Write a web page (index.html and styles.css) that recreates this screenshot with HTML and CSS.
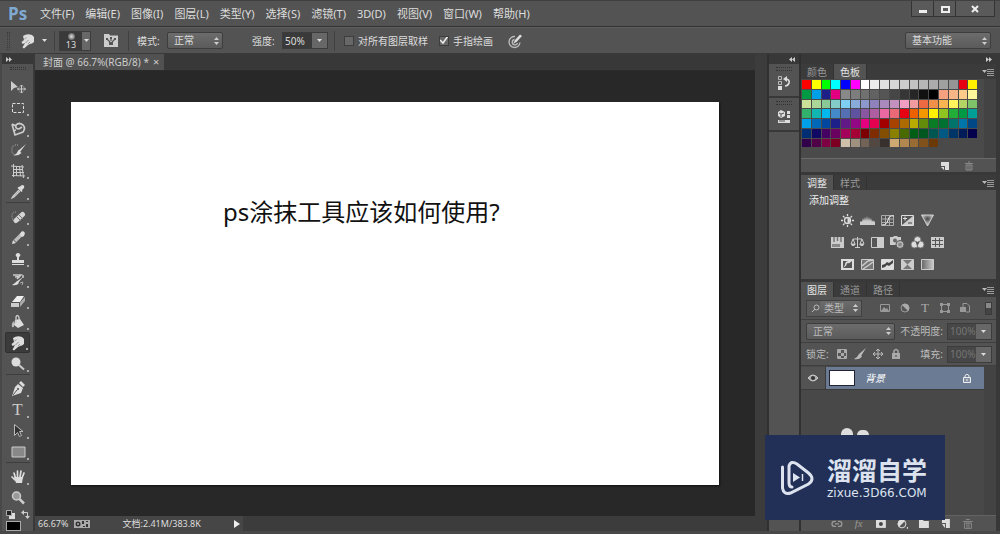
FILE: index.html
```html
<!DOCTYPE html>
<html lang="zh-CN">
<head>
<meta charset="utf-8">
<title>封面 @ 66.7%(RGB/8)</title>
<link rel="stylesheet" href="styles.css">
</head>
<body>
<div class="app">
  <header class="menubar">
    <span class="logo">Ps</span>
    <nav class="menus">
      <button>文件(F)</button><button>编辑(E)</button><button>图像(I)</button><button>图层(L)</button><button>类型(Y)</button><button>选择(S)</button><button>滤镜(T)</button><button>3D(D)</button><button>视图(V)</button><button>窗口(W)</button><button>帮助(H)</button>
    </nav>
    <div class="window-buttons">
      <button aria-label="最小化"><svg width="12" height="10" viewBox="0 0 12 10"><path d="M2 6h8v3H2z" fill="#eee"/></svg></button>
      <button aria-label="最大化"><svg width="12" height="10" viewBox="0 0 12 10"><path d="M3 3h7v5H3z" fill="none" stroke="#eee" stroke-width="2"/></svg></button>
      <button class="close" aria-label="关闭"><svg width="12" height="10" viewBox="0 0 12 10"><path d="M3 2l6 6M9 2L3 8" stroke="#eee" stroke-width="2"/></svg></button>
    </div>
  </header>

  <div class="options">
    <span class="grip-v"></span>
    <button class="tool-preset" aria-label="涂抹工具">
      <svg width="16" height="16" viewBox="0 0 16 16"><path d="M3 3q4-3 9-1l2 2v5q-2 2-4 2l-2 1-4 3.500-1.500-1L5 10l-2.500 1-1-2L4 7z" fill="#ddd"/><path d="M5.500 10l3-3M8 11l2-2M4.500 6l2-1.500" stroke="#777" stroke-width=".7"/></svg>
      <svg width="6" height="4" viewBox="0 0 6 4"><path d="M0 0h5L2.500 3z" fill="#ddd"/></svg>
    </button>
    <span class="divider"></span>
    <button class="brush" aria-label="画笔大小 13"><span class="brush-view"><i></i>13</span><span class="brush-caret caret"></span></button>
    <button class="brush-panel" aria-label="画笔面板"><svg width="16" height="16" viewBox="0 0 16 16"><path d="M1 1h5l1 1.500h8V14H1z" fill="#ccc"/><path d="M4 6l3 3M12 6L9 9M8 5v3" stroke="#555" stroke-width="1.200"/><path d="M3 5h2v2H3zM11 5h2v2h-2zM7 4h2v2H7zM6 9h4v3H6z" fill="#555"/></svg></button>
    <span class="divider"></span>
    <label class="mode-label" for="mode">模式:</label>
    <select id="mode" class="dropdown mode"><option>正常</option></select>
    <label class="strength-label" for="strength">强度:</label>
    <span class="number"><input id="strength" value="50%"><button class="caret" aria-label="强度滑块"></button></span>
    <span class="divider"></span>
    <label class="check all-layers"><input type="checkbox">对所有图层取样</label>
    <label class="check"><input type="checkbox" checked>手指绘画</label>
    <button class="pressure" aria-label="压力控制大小"><svg width="16" height="16" viewBox="0 0 16 16" fill="none"><path d="M8 3.500a5.500 5.500 0 1 0 5 6M7.500 6.500a2.700 2.700 0 1 0 3 3.500" stroke="#bbb" stroke-width="1.300"/><path d="M6 11l2-4 5-5.500 2 1.500-5 5.500z" fill="#ddd"/></svg></button>
    <select class="dropdown workspace" aria-label="工作区"><option>基本功能</option></select>
  </div>

  <main class="work">
    <aside class="tools">
      <div class="dock-head"><svg width="6" height="5" viewBox="0 0 6 5"><path d="M0 0l3 2.500L0 5zM3 0l3 2.500L3 5z" fill="#ccc"/></svg></div>
      <span class="grip"></span>
      <div class="tool-list">
        <button aria-label="移动"><svg viewBox="0 0 16 16"><path d="M1 2v10l3-3 4-1z" fill="#ccc"/><path d="M11.500 6v8M7.500 10h8M10 7.500L11.500 6 13 7.500M10 12.500l1.500 1.500 1.500-1.500M9 8.500L7.500 10 9 11.500M14 8.500l1.500 1.500-1.500 1.500" fill="none" stroke="#ccc"/></svg></button>
        <button class="more" aria-label="矩形选框"><svg viewBox="0 0 16 16"><path d="M2.500 3.500h11v9h-11z" fill="none" stroke="#ddd" stroke-dasharray="3 1.500"/></svg></button>
        <button class="more" aria-label="套索"><svg viewBox="0 0 16 16"><path d="M2 3l3 11 8-3q3-4 0-7-4-3-7 0-1 4 3 4l3-2M2 3l4 2M3 10l3-1" fill="none" stroke="#ccc" stroke-width="1.700"/></svg></button>
        <button class="more" aria-label="快速选择"><svg viewBox="0 0 16 16"><path d="M8 3H5L2 5v6l3 2" fill="none" stroke="#aaa" stroke-dasharray="1 1"/><path d="M16 2l-6 8-2-1zM8.500 8l3 3q-3 3-8 2.500l3-2z" fill="#ddd"/></svg></button>
        <button class="more" aria-label="透视裁剪"><svg viewBox="0 0 16 16"><path d="M3.500 1v13M1 3l13 1M12 2l1.500 13M2 12.500l13 .5M6.500 3v10M9.500 3l1 10M3 6.500h10M3 9.500h11" fill="none" stroke="#ccc"/></svg></button>
        <button class="more" aria-label="吸管"><svg viewBox="0 0 16 16"><path d="M10 2.500l2-1.500q3 0 2 3l-2 2 .5 1-1 1-4-4 1-1z" fill="#ddd"/><path d="M9 6l-6 6-1 2 2-1 6-6" fill="none" stroke="#ccc" stroke-width="1.200"/></svg></button>
        <span class="tool-rule"></span>
        <button class="more" aria-label="污点修复画笔"><svg viewBox="0 0 16 16"><path d="M6 3Q2 3 2 7t3 6" fill="none" stroke="#aaa" stroke-dasharray="1 1"/><path d="M6 11.500l6.500-6" stroke="#d5d5d5" stroke-width="5" stroke-linecap="round"/><path d="M7 8l4 4M9 6l4 4" stroke="#777"/></svg></button>
        <button class="more" aria-label="画笔"><svg viewBox="0 0 16 16"><path d="M5 11l7-7" stroke="#bbb" stroke-width="3.500"/><path d="M11 2l2-1 2 2-1 3-2 1-2-2zM3 10l3 3-4 1z" fill="#ddd"/></svg></button>
        <button class="more" aria-label="仿制图章"><svg viewBox="0 0 16 16"><path d="M7 9V6Q5 5 6 3q2-2 4 0 1 2-1 3v3h5v3H2V9zM2 13h12v1H2z" fill="#ddd"/></svg></button>
        <button class="more" aria-label="历史记录画笔"><svg viewBox="0 0 16 16"><path d="M3 3h8L7 7M13 3v3M5 5q4-1 4 1" fill="none" stroke="#ccc" stroke-width="1.500"/><path d="M13 5l-5 6-2-1zM7 9l2 2q-2 3-7 2l3-2z" fill="#ddd"/><path d="M10 11l3-1-1 3" stroke="#aaa" fill="none"/></svg></button>
        <button class="more" aria-label="橡皮擦"><svg viewBox="0 0 16 16"><path d="M2 9l5-6h7l-4 6z" fill="#eee"/><path d="M1 10h8v4H1z" fill="#ccc"/><path d="M10 9.500L15 4v4l-5 6z" fill="#aaa"/></svg></button>
        <button class="more" aria-label="油漆桶"><svg viewBox="0 0 16 16"><path d="M5 6l5-1 4 6-6 3-4-3z" fill="#ddd"/><path d="M6 9V3q1-3 3 0v3" fill="none" stroke="#ccc" stroke-width="1.300"/><path d="M4 7Q1 9 2 13q2 1 2-1z" fill="#bbb"/></svg></button>
        <button class="more on" aria-label="涂抹"><svg viewBox="0 0 16 16"><path d="M3 3q4-3 9-1l2 2v5q-2 2-4 2l-2 1-4 3.500-1.500-1L5 10l-2.500 1-1-2L4 7z" fill="#ddd"/><path d="M5.500 10l3-3M8 11l2-2M4.500 6l2-1.500" stroke="#777" stroke-width=".7"/></svg></button>
        <button class="more" aria-label="减淡"><svg viewBox="0 0 16 16"><circle cx="6" cy="6" r="4.500" fill="#ddd"/><path d="M9 9l5 4.500" stroke="#ccc" stroke-width="2"/></svg></button>
        <span class="tool-rule"></span>
        <button class="more" aria-label="钢笔"><svg viewBox="0 0 16 16"><path d="M11 0l4 4-2 2-4-4zM8 3l5 4-2 5-9 3 3-9z" fill="#ddd"/><path d="M3 14l4-5" stroke="#555"/><circle cx="8" cy="8" r="1" fill="#444"/></svg></button>
        <button class="more type" aria-label="横排文字">T</button>
        <button class="more" aria-label="路径选择"><svg viewBox="0 0 16 16"><path d="M4.500 1.500v11l3-3 2 4 2-1-2-4h3.500z" fill="#333" stroke="#bbb"/></svg></button>
        <button class="more" aria-label="矩形"><svg viewBox="0 0 16 16"><path d="M2 3h13v10H2z" fill="#888" stroke="#ccc"/></svg></button>
        <span class="tool-rule"></span>
        <button class="more" aria-label="抓手"><svg viewBox="0 0 16 16"><path d="M5.500 9L4 4M7.500 8V2M10 8l1-6M12 9l2-5M5 11L2 8" stroke="#ddd" stroke-width="1.700" stroke-linecap="round"/><path d="M4 8h9l-1 6H6z" fill="#ddd"/></svg></button>
        <button aria-label="缩放"><svg viewBox="0 0 16 16"><circle cx="6.500" cy="6" r="4" fill="#999" stroke="#ccc" stroke-width="1.500"/><path d="M9.500 9l4.500 4.500" stroke="#ccc" stroke-width="2.500"/></svg></button>
      </div>
      <div class="color-actions">
        <svg width="9" height="9" viewBox="0 0 9 9"><path d="M3 3h6v6H3z" fill="#ddd"/><path d="M.5.500h5v5h-5z" fill="#222" stroke="#aaa"/></svg>
        <svg width="9" height="9" viewBox="0 0 9 9"><path d="M0 2.500L3 0v5zM4 6h5L6.500 9z" fill="#ccc"/><path d="M2 2.500h4.500V7" fill="none" stroke="#ccc"/></svg>
      </div>
      <button class="foreground" aria-label="前景色"></button>
    </aside>

    <section class="document">
      <div class="doc-tabs"><div class="doc-tab"><span>封面 @ 66.7%(RGB/8) *</span><button aria-label="关闭文档">×</button></div></div>
      <div class="canvas"><div class="page"><p>ps涂抹工具应该如何使用?</p></div></div>
      <footer class="status"><div class="status-info">
        <span>66.67%</span>
        <svg width="16" height="8" viewBox="0 0 16 8"><path d="M0 0h16v8H0z" fill="#aaa"/><circle cx="4" cy="4" r="2.500" fill="#333"/><circle cx="4" cy="4" r="1" fill="#aaa"/><path d="M8 1h2v3H8zM12 4h2v3h-2zM12 1h2v1h-2zM9 6h2v1H9z" fill="#333"/></svg>
        <span class="doc-size">文档:2.41M/383.8K</span>
        <button aria-label="状态菜单"><svg width="6" height="8" viewBox="0 0 6 8"><path d="M0 0l6 4-6 4z" fill="#eee"/></svg></button>
      </div></footer>
    </section>
    <div class="doc-scroll"></div>

    <aside class="mini-dock">
      <div class="dock-head end"><svg width="6" height="5" viewBox="0 0 6 5"><path d="M3 0L0 2.500 3 5zM6 0L3 2.500 6 5z" fill="#ccc"/></svg></div>
      <div class="mini"><span class="grip"></span><button aria-label="历史记录"><svg width="14" height="15" viewBox="0 0 14 15"><path d="M1.500 1.500h3v3h-3zM1.500 6.500h3v3h-3z" fill="none" stroke="#bbb"/><path d="M1 11h4v4H1z" fill="#ddd"/><path d="M8 4q5 0 4 4-1 3-4 3" fill="none" stroke="#ddd" stroke-width="1.700"/><path d="M6 4l4-3v6z" fill="#ddd"/></svg></button></div>
      <div class="mini"><span class="grip"></span><button aria-label="属性"><svg width="14" height="15" viewBox="0 0 14 15"><path d="M4 1l4 2v4L4 9 1 7V3z" fill="#ddd"/><path d="M2 4l2 1 3-1M4 5v3" stroke="#555" fill="none"/><path d="M10 2h3v3h-3zM10 6h3v3h-3zM1 11h12v3H1z" fill="#ddd"/><path d="M2 12h6" stroke="#555"/></svg></button></div>
    </aside>

    <aside class="panels">
      <div class="dock-head end"><svg width="6" height="5" viewBox="0 0 6 5"><path d="M0 0l3 2.500L0 5zM3 0l3 2.500L3 5z" fill="#ccc"/></svg></div>
      <section class="panel">
        <div class="tabs"><button>颜色</button><button class="on">色板</button><i class="panel-menu"></i></div>
        <div class="swatch-body"><div class="swatches" id="swatches"></div></div>
        <div class="panel-foot">
          <button aria-label="新建色板"><svg width="10" height="10" viewBox="0 0 10 10"><path d="M1 1h8v8H5V5H1z" fill="#ddd"/><path d="M1 6l3 3V6z" fill="#ddd"/></svg></button>
          <button aria-label="删除色板"><svg width="10" height="10" viewBox="0 0 10 10"><path d="M1 2.500h8M4 1h2M2 4h6v5H2zM4 4v5M6 4v5" fill="none" stroke="#888"/></svg></button>
        </div>
      </section>

      <section class="panel">
        <div class="tabs"><button class="on">调整</button><button>样式</button><i class="panel-menu"></i></div>
        <div class="adjust">
          <h2>添加调整</h2>
          <div class="adjust-row">
            <button aria-label="亮度/对比度"><svg viewBox="0 0 15 13"><g stroke="#ddd" stroke-width="1.300" fill="none"><circle cx="7.500" cy="6.500" r="3"/><path d="M7.500 0v2M7.500 11v2M1 6.500h2M12 6.500h2M3 2l1.500 1.500M12 2l-1.500 1.500M3 11l1.500-1.500M12 11l-1.500-1.500"/></g><path d="M7.500 4v5a2.500 2.500 0 0 0 0-5" fill="#ddd"/></svg></button>
            <button aria-label="色阶"><svg viewBox="0 0 15 13"><path d="M0 11V8l1-1 1 1 1-4 1 3 1-4 1 4 1-5 1 5 1-4 1 4 1-3 1 4 1-2 1 2 1-1v4z" fill="#ccc"/></svg></button>
            <button aria-label="曲线"><svg viewBox="0 0 15 13"><path d="M1.500 1.500h12v10h-12zM5.500 1v10M9.500 1v10M1 5h12M1 8.500h12" fill="none" stroke="#aaa"/><path d="M2 11q5 0 6-5t6-4" fill="none" stroke="#eee"/></svg></button>
            <button aria-label="曝光度"><svg viewBox="0 0 15 13"><path d="M1.500 1.500h12v10h-12z" fill="#555" stroke="#ddd"/><path d="M13 2v9H2z" fill="#ccc"/><path d="M3 4.500h4M5 2.500v4" stroke="#ddd"/><path d="M8 9h4" stroke="#444"/></svg></button>
            <button aria-label="自然饱和度"><svg viewBox="0 0 15 13"><defs><radialGradient id="vibrance" cy=".35"><stop stop-color="#444"/><stop offset=".9" stop-color="#bbb"/></radialGradient></defs><path d="M1.500 1h12l-6 11z" fill="url(#vibrance)" stroke="#ccc"/></svg></button>
          </div>
          <div class="adjust-row">
            <button aria-label="色相/饱和度"><svg viewBox="0 0 15 13"><path d="M1 1h13v11H1z" fill="#ccc"/><path d="M4 1v5M7.500 1v4M11 1v5" stroke="#777" stroke-width="1.500"/><path d="M2 8h8v3H2z" fill="#888"/></svg></button>
            <button aria-label="色彩平衡"><svg viewBox="0 0 15 13"><path d="M7.500 1v10M3 3h9M3 3L1 8h4zM12 3l-2 5h4zM5 11.500h5" fill="none" stroke="#ccc"/><path d="M1 8h5L4 10H2zM9 8h5l-1 2h-2z" fill="#ccc"/></svg></button>
            <button aria-label="黑白"><svg viewBox="0 0 15 13"><path d="M1.500 1.500h12v10h-12z" fill="#555" stroke="#ccc"/><path d="M7 1h7v11H7z" fill="#ccc"/></svg></button>
            <button aria-label="照片滤镜"><svg viewBox="0 0 15 13"><path d="M0 1h3l1-1h3l1 1h3v8H0z" fill="#ccc"/><circle cx="5" cy="4.500" r="2" fill="#666"/><circle cx="10" cy="8.500" r="4" fill="#bbb" stroke="#555"/><circle cx="10" cy="8.500" r="2" fill="#888"/></svg></button>
            <button aria-label="通道混合器"><svg viewBox="0 0 15 13"><g fill="#ddd" stroke="#777"><circle cx="7.500" cy="4" r="3.500"/><circle cx="4.500" cy="8.500" r="3.500"/><circle cx="10.500" cy="8.500" r="3.500"/></g><path d="M5.500 6h4l-2 4z" fill="#555"/></svg></button>
            <button aria-label="颜色查找"><svg viewBox="0 0 15 13"><path d="M1 1h13v11H1z" fill="#ccc"/><path d="M5.500 2v9M9.500 2v9M2 4.500h11M2 8.500h11" stroke="#555"/></svg></button>
          </div>
          <div class="adjust-row">
            <button aria-label="反相"><svg viewBox="0 0 15 13"><path d="M2 2h11v9H2z" fill="#555" stroke="#ddd" stroke-width="2"/><path d="M3 10L12 3H9Q5 3 5 7z" fill="#ddd"/><circle cx="8" cy="6.500" r="1.500" fill="#555"/></svg></button>
            <button aria-label="色调分离"><svg viewBox="0 0 15 13"><path d="M1.500 1.500h12v10h-12z" fill="#777" stroke="#ccc"/><path d="M2 8l6-5 5-1M3 11l6-4 4-3" stroke="#ccc" stroke-width="1.500" fill="none"/></svg></button>
            <button aria-label="阈值"><svg viewBox="0 0 15 13"><path d="M1.500 1.500h12v10h-12z" fill="#ddd" stroke="#ddd"/><path d="M2 7l3-1 2-2 2 1 4-3v3L9 8 7 7l-2 2-3 1z" fill="#444"/></svg></button>
            <button aria-label="可选颜色"><svg viewBox="0 0 15 13"><path d="M1.500 1.500h12v10h-12z" fill="#ccc" stroke="#ccc"/><path d="M3 2h9L7.500 6.500zM3 11h9L7.500 6.500z" fill="#777"/></svg></button>
            <button aria-label="渐变映射"><svg viewBox="0 0 15 13"><defs><linearGradient id="ramp"><stop stop-color="#666"/><stop offset="1" stop-color="#ccc"/></linearGradient></defs><path d="M1.500 1.500h12v10h-12z" fill="url(#ramp)" stroke="#ccc"/></svg></button>
          </div>
        </div>
      </section>

      <section class="panel layers">
        <div class="tabs"><button class="on">图层</button><button>通道</button><button>路径</button><i class="panel-menu"></i></div>
        <div class="layer-row">
          <span class="filter-kind"><svg width="9" height="9" viewBox="0 0 9 9"><circle cx="5.500" cy="3.500" r="2.500" fill="none" stroke="#bbb"/><path d="M4 5L1 8" stroke="#bbb"/></svg><select class="dropdown" aria-label="图层筛选"><option>类型</option></select></span>
          <span class="filter-icons">
            <button aria-label="像素"><svg viewBox="0 0 12 12"><path d="M1.500 2.500h9v7h-9z" fill="none" stroke="#999"/><path d="M2 9l3-4 2 2 1-1 2 3z" fill="#999"/></svg></button>
            <button aria-label="调整"><svg viewBox="0 0 12 12"><circle cx="6" cy="6" r="4" fill="#555" stroke="#999"/><path d="M3 3a4 4 0 0 1 6 6z" fill="#aaa"/></svg></button>
            <button class="type" aria-label="文字">T</button>
            <button aria-label="形状"><svg viewBox="0 0 12 12"><path d="M2.500 2.500h7v7h-7z" fill="none" stroke="#999"/><path d="M1 1h3v3H1zM8 1h3v3H8zM1 8h3v3H1zM8 8h3v3H8z" fill="#999"/></svg></button>
            <button aria-label="智能对象"><svg viewBox="0 0 12 12"><path d="M4 5V1.500h4l2.500 2.500v6H7" fill="none" stroke="#999"/><path d="M1 5h6v5H1z" fill="#999"/></svg></button>
          </span>
          <button class="filter-toggle" aria-label="筛选开关"></button>
        </div>
        <div class="layer-row blend">
          <select class="dropdown" aria-label="混合模式"><option>正常</option></select>
          <label for="opacity">不透明度:</label><span class="number dim"><input id="opacity" value="100%" disabled><button class="caret" aria-label="不透明度滑块"></button></span>
        </div>
        <div class="layer-row locks">
          <span>锁定:</span>
          <span class="lock-icons">
            <button aria-label="锁定透明像素"><svg viewBox="0 0 12 12"><path d="M1.500 1.500h9v9h-9z" fill="#555" stroke="#aaa"/><path d="M2 2h3v3H2zM8 2h2v3H8zM5 5h3v3H5zM2 8h3v2H2zM8 8h2v2H8z" fill="#aaa"/></svg></button>
            <button aria-label="锁定图像像素"><svg viewBox="0 0 12 12"><path d="M12 0L7 8 5 6zM5 6l3 2q-2 4-8 3l3-2z" fill="#bbb"/></svg></button>
            <button aria-label="锁定位置"><svg viewBox="0 0 12 12"><path d="M6 1v10M1 6h10M4 3l2-2 2 2M4 9l2 2 2-2M3 4L1 6l2 2M9 4l2 2-2 2" fill="none" stroke="#bbb"/></svg></button>
            <button aria-label="锁定全部"><svg viewBox="0 0 12 12"><path d="M2 5h8v6H2z" fill="#aaa"/><path d="M4 5V3q2-3 4 0v2" fill="none" stroke="#aaa" stroke-width="1.500"/><path d="M6 7v2" stroke="#444"/></svg></button>
          </span>
          <label for="fill">填充:</label><span class="number dim"><input id="fill" value="100%" disabled><button class="caret" aria-label="填充滑块"></button></span>
        </div>
        <div class="layer-list">
          <div class="layer">
            <button class="eye" aria-label="可见性"><svg width="12" height="8" viewBox="0 0 12 8"><path d="M1 4q5-6 10 0-5 6-10 0z" fill="#aaa" stroke="#ccc"/><circle cx="6" cy="4" r="2" fill="#333"/></svg></button>
            <div class="layer-main"><span class="thumb"></span><span class="layer-name">背景</span><svg width="10" height="11" viewBox="0 0 10 11"><path d="M1.500 4.500h7v5h-7z" fill="#8491a5" stroke="#eee"/><path d="M3 4V2.500q2-2.500 4 0V4M5 6v2" fill="none" stroke="#eee"/></svg></div>
          </div>
        </div>
        <div class="layer-foot">
          <button aria-label="链接"><svg viewBox="0 0 12 12"><path d="M5 3.500H3.500a2.500 2.500 0 0 0 0 5H5M7 3.500h1.500a2.500 2.500 0 0 1 0 5H7M4 6h4" fill="none" stroke="#999" stroke-width="1.300"/></svg></button>
          <button class="fx" aria-label="图层样式">fx</button>
          <button aria-label="蒙版"><svg viewBox="0 0 12 12"><path d="M1 2h10v8H1z" fill="#ddd"/><circle cx="6" cy="6" r="2" fill="#444"/></svg></button>
          <button aria-label="调整图层"><svg viewBox="0 0 12 12"><circle cx="5" cy="6" r="4" fill="#555" stroke="#ddd"/><path d="M2 9a4 4 0 0 1 6-6z" fill="#ddd"/><path d="M10 9h2v2h-2z" fill="#ddd"/></svg></button>
          <button aria-label="新建组"><svg viewBox="0 0 12 12"><path d="M1 2h4l1 1h5v7H1z" fill="#ddd"/></svg></button>
          <button aria-label="新建图层"><svg viewBox="0 0 12 12"><path d="M2 1h8v9H6V5H2z" fill="#ddd"/><path d="M2 6l3 4V6z" fill="#ddd"/></svg></button>
          <button aria-label="删除图层"><svg viewBox="0 0 12 12"><path d="M1 3.500h10M4 1.500h4M2.500 5h7v5.500h-7zM5 5v5M7 5v5" fill="none" stroke="#888"/></svg></button>
        </div>
      </section>
    </aside>
  </main>

  <div class="watermark">
    <svg width="36" height="38" viewBox="0 0 36 38" fill="none" stroke="#dce3ef"><path d="M3.500 8v21q1 7 8 5l18-9q7-5 0-11L18 5q-6-4-8 2v17q0 4 3 4" stroke-width="3" stroke-linecap="round"/><path d="M14 14l7 4.500-7 4.500z" fill="#dce3ef" stroke="none"/><path d="M23.500 15v7" stroke-width="1.500"/></svg>
    <div class="watermark-text"><strong>溜溜自学</strong><span>zixue.3D66.COM</span></div>
  </div>
</div>
<script src="script.js"></script>
</body>
</html>
```
FILE: styles.css
```css
* { box-sizing: border-box; }
body { margin: 0; background: #535353; color: #ddd; font: 10px/14px "Noto Sans", "Noto Sans CJK SC", sans-serif; }
button, input, select { margin: 0; padding: 0; border: 0; background: none; color: inherit; font: inherit; }
svg { display: block; flex: none; }
.app { position: relative; display: flex; flex-direction: column; height: 100vh; overflow: hidden; border-bottom: 3px solid #484848; }

.menubar { display: flex; flex: none; align-items: center; height: 27px; padding-left: 8px; border-top: 1px solid #404040; border-bottom: 1px solid #333; }
.logo { width: 26px; color: #80a9d2; font: bold 17px/24px "Open Sans", sans-serif; }
.menus { display: flex; gap: 11px; padding-left: 6px; font-size: 11px; }
.window-buttons { display: flex; align-self: flex-start; margin: 0 5px 0 auto; border: 1px solid #333; border-top: 0; background: #5a5a5a; }
.window-buttons button { display: grid; place-items: center; width: 22px; height: 15px; border-right: 1px solid #333; }
.window-buttons .close { width: 38px; border: 0; }

.options { display: flex; flex: none; align-items: center; height: 27px; padding: 0 9px 0 7px; border-top: 1px solid #5e5e5e; border-bottom: 1px solid #3a3a3a; }
.grip-v { width: 3px; height: 18px; border: 1px dotted #3b3b3b; border-width: 0 1px; }
.tool-preset { display: flex; align-items: center; gap: 6px; margin-left: 10px; }
.divider { width: 1px; height: 20px; margin: 0 4px 0 6px; background: #404040; }
.brush { display: flex; border: 1px solid #3c3c3c; }
.brush-view { display: flex; flex-direction: column; align-items: center; width: 22px; height: 18px; padding-top: 1px; background: #3a3a3a; font-size: 9px; line-height: 10px; }
.brush-view i { flex: none; width: 7px; height: 7px; border-radius: 50%; background: radial-gradient(#ddd, #3a3a3a); }
.caret { width: 15px; background: #676767 url("data:image/svg+xml,%3Csvg xmlns='http://www.w3.org/2000/svg' width='5' height='3'%3E%3Cpath d='M0 0h5L2.500 3z' fill='%23ddd'/%3E%3C/svg%3E") center no-repeat; }
.brush-caret { width: 8px; }
.brush-panel { margin: 0 3px 0 12px; }
.mode-label { width: 30px; margin-left: 4px; }
.dropdown { appearance: none; height: 17px; padding: 0 14px 0 6px; border: 1px solid #3d3d3d; border-radius: 2px; background: url("data:image/svg+xml,%3Csvg xmlns='http://www.w3.org/2000/svg' width='5' height='8'%3E%3Cpath d='M0 3L2.500 0 5 3zM0 5h5L2.500 8z' fill='%23ccc'/%3E%3C/svg%3E") right 3px center no-repeat, linear-gradient(#6c6c6c, #5b5b5b); line-height: 15px; }
.mode { width: 56px; }
.strength-label { width: 30px; margin-left: 29px; }
.number { display: flex; height: 17px; border: 1px solid #3c3c3c; }
.number input { width: 29px; padding-left: 2px; background: #3a3a3a; }
.check { display: flex; align-items: center; gap: 4px; margin-left: 5px; }
.check input { appearance: none; width: 10px; height: 10px; border: 1px solid #3d3d3d; background: #686868; }
.check input:checked { background: #686868 url("data:image/svg+xml,%3Csvg xmlns='http://www.w3.org/2000/svg' width='10' height='10'%3E%3Cpath d='M1 4l3 3 5-7' fill='none' stroke='%23eee' stroke-width='1.500'/%3E%3C/svg%3E") center no-repeat; }
.all-layers { margin-right: 6px; }
.pressure { margin-left: 14px; }
.workspace { width: 86px; margin-left: auto; }

.work { display: flex; flex: 1; min-height: 0; background: #383838; }
.dock-head { display: flex; flex: none; align-items: center; height: 10px; padding: 0 4px; background: #383838; }
.end { justify-content: flex-end; }
.grip { display: block; flex: none; height: 5px; border: 1px dotted #333; border-width: 1px 0; }
.tools { display: flex; flex: none; flex-direction: column; width: 34px; border-left: 2px solid #484848; border-right: 1px solid #3a3a3a; background: #535353; }
.tools > .grip { width: 16px; height: 3px; margin: 3px 8px 6px; }
.tool-list { display: flex; flex-direction: column; align-items: center; }
.tool-list button { position: relative; display: grid; place-items: center; width: 25px; height: 21px; }
.tool-list svg { width: 16px; height: 16px; }
.more::after { content: ""; position: absolute; right: 1px; bottom: 2px; width: 2px; height: 2px; background: #aaa; }
.tool-list .on { border: 1px solid #303030; border-radius: 2px; background: #3b3b3b; }
.type { color: #ccc; font: 17px/18px "Liberation Serif", serif; }
.tool-rule { width: 24px; height: 4px; border-top: 1px solid #3d3d3d; border-bottom: 1px solid #535353; }
.color-actions { display: flex; justify-content: space-between; width: 24px; margin: 2px 0 2px 4px; }
.foreground { width: 15px; height: 10px; margin-left: 4px; border: 1px solid #aaa; background: #000; }

.document { display: flex; flex: 1; flex-direction: column; min-width: 0; padding-left: 1px; background: #383838; }
.doc-tabs { display: flex; flex: none; height: 17px; border-bottom: 1px solid #2b2b2b; }
.doc-tab { display: flex; align-items: center; gap: 4px; padding: 0 5px 0 8px; background: #515151; color: #ccc; font-size: 10px; }
.doc-tab button { font-size: 11px; }
.canvas { display: flex; flex: 1; align-items: center; justify-content: center; min-height: 0; background: #282828; }
.page { width: 90%; aspect-ratio: 648 / 383; padding: 94px 24px 0 152px; background: #fff; color: #111; box-shadow: 1px 1px 2px #111; }
.page p { margin: 0; font-size: 24px; line-height: 32px; }
.status { flex: none; height: 15px; background: #3c3c3c; }
.status-info { display: flex; align-items: center; width: 208px; height: 15px; padding: 0 3px; background: #464646; font-size: 9px; }
.status-info svg { margin-left: 6px; }
.doc-size { flex: 1; padding-left: 32px; }
.doc-size + button { margin-right: 0; }
.doc-scroll { flex: none; width: 14px; border-right: 2px solid #303030; background: #3c3c3c; }

.mini-dock { flex: none; width: 32px; border-right: 2px solid #303030; background: #535353; }
.mini { display: flow-root; height: 34px; border-bottom: 2px solid #383838; }
.mini .grip { width: 16px; height: 4px; margin: 3px 7px 4px; }
.mini button { display: block; margin: 0 auto; }
.panels { display: flex; flex: none; flex-direction: column; width: 199px; padding-right: 4px; }
.panel { flex: none; margin-bottom: 3px; background: #535353; }
.tabs { display: flex; flex: none; height: 15px; background: #3b3b3b; color: #999; }
.tabs button { padding: 0 6px; border-right: 1px solid #333; }
.tabs .on { background: #535353; color: #e4e4e4; }
.panel-menu { width: 14px; height: 8px; margin: 4px 1px 0 auto; background: url("data:image/svg+xml,%3Csvg xmlns='http://www.w3.org/2000/svg' width='14' height='8'%3E%3Cpath d='M1 2h5L3.500 5z' fill='%23bbb'/%3E%3Cpath d='M6 1.500h7M6 3.500h7M6 5.500h7M6 7.500h7' stroke='%23999'/%3E%3C/svg%3E"); }
.swatch-body { height: 79px; border-right: 12px solid #434343; background: #4a4a4a; }
.swatches { display: grid; grid-template-columns: repeat(18, 1fr); width: 176px; gap: 1px; padding: 1px 0 0 1px; }
.swatches button { aspect-ratio: 1; }
.panel-foot { display: flex; justify-content: flex-end; align-items: center; gap: 14px; height: 14px; padding-right: 22px; border-top: 1px solid #6a6a6a; }
.adjust { padding: 3px 0 4px; }
.adjust h2 { margin: 0 8px 2px; color: #eee; font-size: 10px; font-weight: 400; line-height: 14px; }
.adjust-row { display: flex; justify-content: center; gap: 5px; width: 172px; height: 22px; align-items: center; }
.adjust-row svg { width: 15px; height: 13px; }

.layers { display: flex; flex: 1; flex-direction: column; min-height: 0; margin: 0; }
.layer-row { display: flex; flex: none; align-items: center; height: 23px; padding: 0 4px 0 5px; border-bottom: 1px solid #3f3f3f; color: #bbb; }
.layer-row .dropdown { color: #bbb; }
.filter-kind { display: flex; align-items: center; width: 56px; padding-left: 4px; border: 1px solid #414141; background: #5c5c5c; }
.filter-kind .dropdown { flex: 1; min-width: 0; height: 15px; padding: 0 12px 0 4px; border: 0; background-color: transparent; }
.filter-icons { display: flex; align-items: center; gap: 8px; margin-left: 17px; }
.filter-icons button, .lock-icons button, .layer-foot button { width: 12px; height: 12px; }
.filter-icons .type { color: #aaa; font-size: 13px; line-height: 12px; }
.filter-toggle { width: 7px; height: 13px; margin-left: auto; border: 1px solid #3b3b3b; background: linear-gradient(#888 5px, #444 5px); }
.blend .dropdown { width: 89px; }
.blend label { margin-left: auto; }
.layer-row .number { margin-left: 4px; }
.dim input { width: 28px; background: #474747; color: #757575; }
.lock-icons { display: flex; gap: 6px; margin-left: 7px; }
.locks label { margin-left: auto; }
.layer-list { flex: 1; min-height: 0; padding-top: 1px; border-right: 12px solid #434343; background: #484848; }
.layer { display: flex; height: 23px; border-bottom: 1px solid #3b3b3b; background: #535353; }
.eye { display: grid; flex: none; place-items: center; width: 25px; border-right: 1px solid #3b3b3b; }
.layer-main { display: flex; flex: 1; align-items: center; padding: 0 12px 0 3px; background: #6b7b93; color: #fff; }
.thumb { width: 26px; height: 16px; border: 1px solid #223; background: #fff; }
.layer-name { flex: 1; padding-left: 10px; font-style: italic; }
.layer-foot { display: flex; flex: none; align-items: center; gap: 10px; height: 16px; padding: 0 22px 0 30px; border-top: 1px solid #626262; }
.layer-foot .fx { color: #999; font: italic 11px/11px "Liberation Serif", serif; }

.watermark { position: absolute; right: 55px; bottom: 11px; display: flex; align-items: center; gap: 12px; width: 180px; height: 85px; padding-left: 14px; background: #222f56; color: #dce3ef; }
.watermark::before, .watermark::after { content: ""; position: absolute; top: -7px; left: 76px; width: 12px; height: 7px; border-radius: 6px 6px 0 0; background: #ddd; }
.watermark::after { top: -5px; left: 92px; height: 5px; }
.watermark-text { display: flex; flex-direction: column; }
.watermark strong { font: 700 25px/30px "Liberation Sans", "Noto Sans CJK SC", sans-serif; }
.watermark-text span { font: 12px/14px "DejaVu Sans", sans-serif; }
```
FILE: script.js
```js
const rows = [
  "ff0000 ffff00 00ff00 00ffff 0000ff ff00ff ffffff ebebeb e1e1e1 d7d7d7 cccccc c2c2c2 b7b7b7 acacac a0a0a0 959595 e60012 fff100",
  "009944 00a0e9 1d2088 e4007f 898989 7d7d7d 707070 626262 555555 464646 363636 262626 111111 000000 f5a07e f8b585 fccb8a fff799",
  "cce198 acd598 89c997 84ccc9 7ecef4 88abda 8c97cb 8f82bc aa89bd c490bf f19ec2 f29c9f ec6941 f19149 f8b551 fff45c b3d465 80c269",
  "32b16c 13b5b1 00b7ee 448aca 556fb5 5f52a0 8957a1 ae5da1 ea68a2 eb6877 e60012 eb6100 f39800 fff100 8fc31f 22ac38 009944 009e96",
  "00a0e9 0068b7 00479d 1d2088 601986 920783 e4007f e5004f a40000 a84200 ac6a00 b7aa00 638c0b 097c25 007130 00736d 0075a9 004986",
  "002e73 100964 440062 6a005f a4005b a40035 7d0000 7f2d00 834e00 8a8000 486a00 005e15 00561f 005752 005982 003567 001c58 03004c",
  "31004a 500047 7e0043 7d0022 cfc0a9 9f9080 736357 534741 37302d cfa972 b28850 996c33 81511c 6a3906"
];
const grid = document.getElementById("swatches");
for (const color of rows.join(" ").split(" ")) {
  const swatch = document.createElement("button");
  swatch.style.background = "#" + color;
  swatch.setAttribute("aria-label", "#" + color);
  grid.append(swatch);
}
```
